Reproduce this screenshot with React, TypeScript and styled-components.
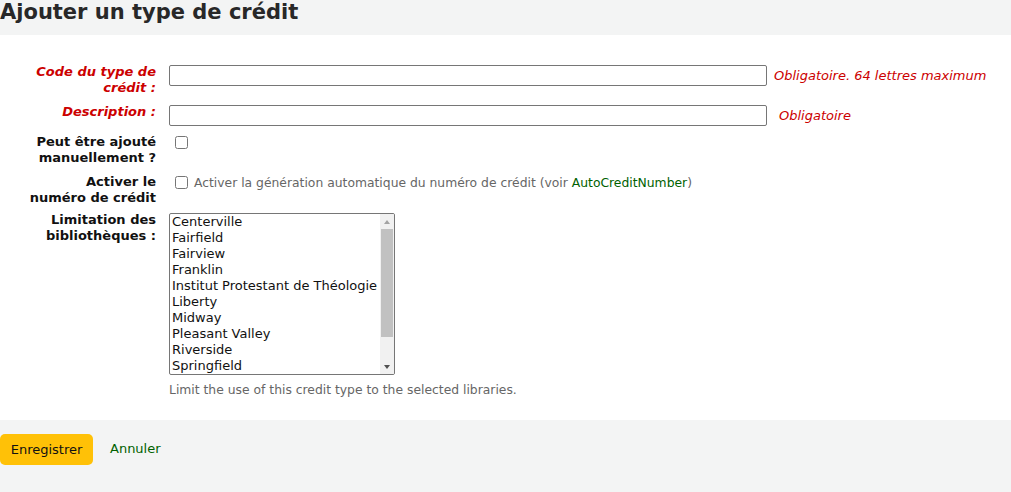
import React from 'react';
import styled, { createGlobalStyle } from 'styled-components';

const libraries = [
  'Centerville',
  'Fairfield',
  'Fairview',
  'Franklin',
  'Institut Protestant de Théologie',
  'Liberty',
  'Midway',
  'Pleasant Valley',
  'Riverside',
  'Springfield',
  'Troy',
  'Union',
];

const VISIBLE_ROWS = 10;
const TRACK_HEIGHT = 130;

const GlobalStyle = createGlobalStyle`
  html, body {
    margin: 0;
    padding: 0;
    background: #fff;
  }
  body {
    font-family: 'DejaVu Sans', 'Noto Sans', sans-serif;
    font-size: 13px;
    color: #111;
  }
`;

// list box scrolled to the top: only the visible rows are rendered
const LibraryList: React.FC<{ items: string[] }> = ({ items }) => {
  const visible = items.slice(0, VISIBLE_ROWS);
  const thumbHeight = Math.round((TRACK_HEIGHT * visible.length) / items.length);

  return (
    <S.Listbox role="listbox" aria-multiselectable="true">
      <S.Options>
        {visible.map((name) => (
          <S.Option key={name} role="option" aria-selected="false">
            {name}
          </S.Option>
        ))}
      </S.Options>
      <S.Scrollbar>
        <S.ScrollButton>
          <S.Arrow $dir="up" />
        </S.ScrollButton>
        <S.Track>
          <S.Thumb style={{ height: thumbHeight }} />
        </S.Track>
        <S.ScrollButton>
          <S.Arrow $dir="down" />
        </S.ScrollButton>
      </S.Scrollbar>
    </S.Listbox>
  );
};

const App: React.FC = () => {
  return (
    <S.Page>
      <GlobalStyle />
      <S.Header>
        <S.Title>Ajouter un type de crédit</S.Title>
      </S.Header>

      <S.Form>
        <S.Row $space={8}>
          <S.Label $required>Code du type de crédit :</S.Label>
          <S.Field>
            <S.TextInput type="text" />
            <S.Required $offset={7}>Obligatoire. 64 lettres maximum</S.Required>
          </S.Field>
        </S.Row>

        <S.Row $space={8}>
          <S.Label $required>Description :</S.Label>
          <S.Field>
            <S.TextInput type="text" />
            <S.Required $offset={12}>Obligatoire</S.Required>
          </S.Field>
        </S.Row>

        <S.Row $space={8}>
          <S.Label>Peut être ajouté manuellement ?</S.Label>
          <S.Field $top>
            <S.Checkbox type="checkbox" />
          </S.Field>
        </S.Row>

        <S.Row $space={6}>
          <S.Label>Activer le numéro de crédit</S.Label>
          <S.Field $top>
            <S.Checkbox type="checkbox" />
            <S.Hint>
              Activer la génération automatique du numéro de crédit (voir{' '}
              <S.Link href="#">AutoCreditNumber</S.Link>)
            </S.Hint>
          </S.Field>
        </S.Row>

        <S.Row $space={0}>
          <S.Label>Limitation des bibliothèques :</S.Label>
          <S.Stack>
            <LibraryList items={libraries} />
            <S.HelpText>
              Limit the use of this credit type to the selected libraries.
            </S.HelpText>
          </S.Stack>
        </S.Row>
      </S.Form>

      <S.Footer>
        <S.SaveButton type="button">Enregistrer</S.SaveButton>
        <S.CancelLink href="#">Annuler</S.CancelLink>
      </S.Footer>
    </S.Page>
  );
};

export default App;

const S = {
  Page: styled.div`
    width: 1011px;
    min-height: 492px;
    display: flex;
    flex-direction: column;
    background: #f3f4f4;
  `,

  Header: styled.div`
    height: 35px;
    background: #f3f4f4;
  `,

  Title: styled.h1`
    margin: 0;
    font-size: 21px;
    line-height: 24px;
    font-weight: bold;
    color: #282828;
  `,

  Form: styled.div`
    display: flex;
    flex-direction: column;
    background: #fff;
    padding: 29px 0 23px;
  `,

  Row: styled.div<{ $space: number }>`
    display: grid;
    grid-template-columns: 156px 1fr;
    column-gap: 13px;
    align-items: start;
    margin-bottom: ${({ $space }) => $space}px;
  `,

  Label: styled.div<{ $required?: boolean }>`
    justify-self: end;
    width: 130px;
    text-align: right;
    font-weight: bold;
    line-height: 16px;
    font-style: ${({ $required }) => ($required ? 'italic' : 'normal')};
    color: ${({ $required }) => ($required ? '#cc0000' : '#111')};
  `,

  Field: styled.div<{ $top?: boolean }>`
    display: flex;
    align-items: ${({ $top }) => ($top ? 'flex-start' : 'center')};
    padding-top: ${({ $top }) => ($top ? '1px' : '0')};
  `,

  Stack: styled.div`
    display: flex;
    flex-direction: column;
    padding-top: 1px;
  `,

  TextInput: styled.input`
    box-sizing: border-box;
    width: 598px;
    height: 21px;
    margin: 1px 0 0;
    padding: 1px 4px;
    border: 1px solid #767676;
    border-radius: 2px;
    font-family: 'DejaVu Sans', sans-serif;
    font-size: 13px;
    background: #fff;
  `,

  Required: styled.span<{ $offset: number }>`
    margin-left: ${({ $offset }) => $offset}px;
    font-style: italic;
    font-size: 13px;
    color: #cc0000;
  `,

  Checkbox: styled.input`
    width: 13px;
    height: 13px;
    margin: 1px 6px 0 6px;
  `,

  Hint: styled.span`
    font-size: 12.35px;
    line-height: 14px;
    margin-top: 1px;
    color: #666;
  `,

  Link: styled.a`
    color: #006100;
    text-decoration: none;
  `,

  Listbox: styled.div`
    box-sizing: border-box;
    width: 226px;
    height: 162px;
    display: grid;
    grid-template-columns: 1fr 14px;
    grid-template-rows: 160px;
    border: 1px solid #767676;
    border-radius: 2px;
    background: #fff;
    overflow: hidden;
  `,

  Options: styled.div`
    overflow: hidden;
  `,

  Option: styled.div`
    padding: 0 2px;
    height: 16px;
    line-height: 16px;
    font-size: 13px;
    color: #111;
    white-space: nowrap;
  `,

  Scrollbar: styled.div`
    display: flex;
    flex-direction: column;
    background: #f1f1f1;
  `,

  ScrollButton: styled.div`
    height: 15px;
    display: flex;
    align-items: center;
    justify-content: center;
  `,

  Arrow: styled.span<{ $dir: 'up' | 'down' }>`
    width: 0;
    height: 0;
    border-left: 3.5px solid transparent;
    border-right: 3.5px solid transparent;
    ${({ $dir }) =>
      $dir === 'up'
        ? 'border-bottom: 4px solid #a3a3a3;'
        : 'border-top: 4px solid #505050;'}
  `,

  Track: styled.div`
    flex: 1;
    padding: 0 1px;
  `,

  Thumb: styled.div`
    background: #c1c1c1;
  `,

  HelpText: styled.div`
    margin-top: 8px;
    font-size: 12.35px;
    color: #666;
  `,

  Footer: styled.div`
    flex: 1;
    display: flex;
    align-items: flex-start;
    gap: 17px;
    padding-top: 14px;
    background: #f3f4f4;
  `,

  SaveButton: styled.button`
    height: 31px;
    width: 93px;
    padding: 0;
    border: none;
    border-radius: 5px;
    background: #ffc107;
    color: #111;
    font-family: 'DejaVu Sans', sans-serif;
    font-size: 13px;
    cursor: pointer;
  `,

  CancelLink: styled.a`
    margin-top: 7px;
    color: #006100;
    text-decoration: none;
    font-size: 13px;
  `,
};
